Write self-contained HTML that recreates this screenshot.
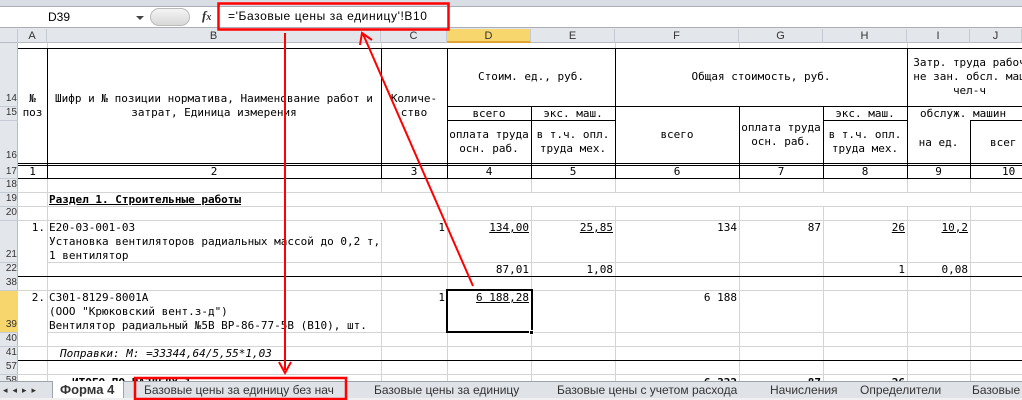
<!DOCTYPE html>
<html><head><meta charset="utf-8"><style>
*{margin:0;padding:0;box-sizing:border-box}
body{width:1022px;height:400px;overflow:hidden;background:#fff;position:relative;font-family:"DejaVu Sans Mono","Liberation Mono",monospace;font-size:11px;color:#000}
div{position:absolute}
.t{white-space:nowrap;line-height:14px}
.c{text-align:center}
.r{text-align:right}
.h{height:1px}
.v{width:1px}
.g{background:#d4d4d4}
.b{background:#000}
.rh{left:0;width:18px;font-size:10px;color:#333;text-align:right;padding-right:1px;line-height:14px;font-family:"Liberation Sans",sans-serif}
.ch{top:29px;height:14px;text-align:center;font-family:"Liberation Sans",sans-serif;font-size:11px;color:#333;border-right:1px solid #c5cad3;line-height:14px}
u{text-decoration:underline}
</style></head><body>
<!-- toolbar strip -->
<div style="left:0;top:0;width:1022px;height:7px;background:#d9dde4;border-bottom:1px solid #a9aeb6"></div>
<div style="left:0;top:7px;width:1022px;height:21px;background:#fff;border-bottom:1px solid #a9aeb6"></div>
<div class="t" style="left:48px;top:10px;font-family:'Liberation Sans',sans-serif;font-size:12px">D39</div>
<div style="left:136px;top:16px;width:0;height:0;border-left:4px solid transparent;border-right:4px solid transparent;border-top:4px solid #444"></div>
<div style="left:150px;top:8px;width:40px;height:18px;border-radius:9px;background:linear-gradient(#f4f4f4,#d8d8d8);border:1px solid #bbb"></div>
<div class="t" style="left:202px;top:9px;font-family:'Liberation Serif',serif;font-style:italic;font-weight:bold;font-size:13px;color:#333">f<span style="font-size:10px">x</span></div>
<div class="t" style="left:228px;top:9px;font-family:'Liberation Sans',sans-serif;font-size:12px;letter-spacing:0.6px">='Базовые цены за единицу'!B10</div>
<!-- column headers -->
<div style="left:0;top:28px;width:1022px;height:15px;background:#e3e6eb;border-bottom:1px solid #b7bcc4"></div>
<div class="ch" style="left:0;width:18px"></div>
<div class="ch" style="left:18px;width:29px">A</div>
<div class="ch" style="left:47px;width:334px">B</div>
<div class="ch" style="left:381px;width:66px">C</div>
<div class="ch" style="left:447px;width:84px;background:#f8d66e;border-bottom:2px solid #e0a530">D</div>
<div class="ch" style="left:531px;width:84px">E</div>
<div class="ch" style="left:615px;width:124px">F</div>
<div class="ch" style="left:739px;width:84px">G</div>
<div class="ch" style="left:823px;width:84px">H</div>
<div class="ch" style="left:907px;width:63px">I</div>
<div class="ch" style="left:970px;width:52px">J</div>
<!-- row header column -->
<div style="left:0;top:43px;width:18px;height:338px;background:#e3e6eb;border-right:1px solid #b7bcc4"></div>
<div style="left:0;top:290px;width:18px;height:42px;background:#f8d66e"></div>
<div class="rh" style="top:92px">14</div>
<div class="rh" style="top:106px">15</div>
<div class="rh" style="top:149px">16</div>
<div class="rh" style="top:165px">17</div>
<div class="rh" style="top:178px">18</div>
<div class="rh" style="top:192px">19</div>
<div class="rh" style="top:206px">20</div>
<div class="rh" style="top:248px">21</div>
<div class="rh" style="top:262px">22</div>
<div class="rh" style="top:276px">38</div>
<div class="rh" style="top:318px">39</div>
<div class="rh" style="top:332px">40</div>
<div class="rh" style="top:346px">41</div>
<div class="rh" style="top:360px">57</div>
<div class="rh" style="top:374px">58</div>
<!-- row header separators -->
<div class="h" style="left:0;top:106px;width:18px;background:#c5cad3"></div>
<div class="h" style="left:0;top:120px;width:18px;background:#c5cad3"></div>
<div class="h" style="left:0;top:178px;width:18px;background:#c5cad3"></div>
<div class="h" style="left:0;top:192px;width:18px;background:#c5cad3"></div>
<div class="h" style="left:0;top:206px;width:18px;background:#c5cad3"></div>
<div class="h" style="left:0;top:220px;width:18px;background:#c5cad3"></div>
<div class="h" style="left:0;top:262px;width:18px;background:#c5cad3"></div>
<div class="h" style="left:0;top:290px;width:18px;background:#c5cad3"></div>
<div class="h" style="left:0;top:332px;width:18px;background:#c5cad3"></div>
<div class="h" style="left:0;top:346px;width:18px;background:#c5cad3"></div>
<div class="h" style="left:0;top:374px;width:18px;background:#c5cad3"></div>

<!-- gray gridlines body -->
<div class="v g" style="left:47px;top:43px;height:5px"></div>
<div class="v g" style="left:381px;top:43px;height:5px"></div>
<div class="v g" style="left:615px;top:43px;height:5px"></div>
<div class="v g" style="left:739px;top:43px;height:5px"></div>
<div class="v g" style="left:907px;top:43px;height:5px"></div>
<div class="h g" style="left:18px;top:192px;width:1004px"></div>
<div class="h g" style="left:18px;top:206px;width:1004px"></div>
<div class="h g" style="left:18px;top:220px;width:1004px"></div>
<div class="h g" style="left:47px;top:262px;width:975px"></div>
<div class="h g" style="left:18px;top:290px;width:1004px"></div>
<div class="h g" style="left:47px;top:332px;width:975px"></div>
<div class="h g" style="left:18px;top:346px;width:1004px"></div>
<div class="h g" style="left:18px;top:374px;width:1004px"></div>
<div class="v g" style="left:47px;top:178px;height:203px"></div>
<div class="v g" style="left:381px;top:178px;height:14px"></div>
<div class="v g" style="left:381px;top:220px;height:161px"></div>
<div class="v g" style="left:447px;top:178px;height:14px"></div>
<div class="v g" style="left:447px;top:206px;height:175px"></div>
<div class="v g" style="left:531px;top:178px;height:14px"></div>
<div class="v g" style="left:531px;top:206px;height:175px"></div>
<div class="v g" style="left:615px;top:178px;height:14px"></div>
<div class="v g" style="left:615px;top:206px;height:175px"></div>
<div class="v g" style="left:739px;top:178px;height:14px"></div>
<div class="v g" style="left:739px;top:206px;height:175px"></div>
<div class="v g" style="left:823px;top:178px;height:14px"></div>
<div class="v g" style="left:823px;top:206px;height:175px"></div>
<div class="v g" style="left:907px;top:178px;height:14px"></div>
<div class="v g" style="left:907px;top:206px;height:175px"></div>
<div class="v g" style="left:970px;top:178px;height:14px"></div>
<div class="v g" style="left:970px;top:206px;height:175px"></div>

<!-- black header table -->
<div class="h b" style="left:18px;top:48px;width:1004px"></div>
<div class="h b" style="left:447px;top:106px;width:575px"></div>
<div class="h b" style="left:447px;top:120px;width:168px"></div>
<div class="h b" style="left:823px;top:120px;width:84px"></div>
<div class="h b" style="left:970px;top:120px;width:52px"></div>
<div class="h b" style="left:18px;top:163px;width:1004px"></div>
<div class="h b" style="left:18px;top:165px;width:1004px"></div>
<div class="h b" style="left:18px;top:178px;width:1004px"></div>
<div class="v b" style="left:47px;top:48px;height:131px"></div>
<div class="v b" style="left:381px;top:48px;height:131px"></div>
<div class="v b" style="left:447px;top:48px;height:131px"></div>
<div class="v b" style="left:531px;top:106px;height:73px"></div>
<div class="v b" style="left:615px;top:48px;height:131px"></div>
<div class="v b" style="left:739px;top:106px;height:73px"></div>
<div class="v b" style="left:823px;top:106px;height:73px"></div>
<div class="v b" style="left:907px;top:48px;height:131px"></div>
<div class="v b" style="left:970px;top:120px;height:59px"></div>
<div class="h b" style="left:18px;top:276px;width:1004px"></div>
<div class="h b" style="left:18px;top:360px;width:1004px"></div>

<!-- header text -->
<div class="t c" style="left:18px;top:92px;width:29px">№<br>поз</div>
<div class="t c" style="left:47px;top:92px;width:334px">Шифр и № позиции норматива, Наименование работ и<br>затрат, Единица измерения</div>
<div class="t c" style="left:381px;top:92px;width:66px">Количе-<br>ство</div>
<div class="t c" style="left:447px;top:70px;width:168px">Стоим. ед., руб.</div>
<div class="t c" style="left:615px;top:70px;width:292px">Общая стоимость, руб.</div>
<div class="t c" style="left:907px;top:56px;width:125px">Затр. труда рабоч<br>не зан. обсл. маш<br>чел-ч</div>
<div class="t c" style="left:447px;top:107px;width:84px">всего</div>
<div class="t c" style="left:531px;top:107px;width:84px">экс. маш.</div>
<div class="t c" style="left:823px;top:107px;width:84px">экс. маш.</div>
<div class="t" style="left:920px;top:107px">обслуж. машин</div>
<div class="t c" style="left:447px;top:128px;width:84px">оплата труда<br>осн. раб.</div>
<div class="t c" style="left:531px;top:128px;width:84px">в т.ч. опл.<br>труда мех.</div>
<div class="t c" style="left:615px;top:128px;width:124px">всего</div>
<div class="t c" style="left:739px;top:121px;width:84px">оплата труда<br>осн. раб.</div>
<div class="t c" style="left:823px;top:128px;width:84px">в т.ч. опл.<br>труда мех.</div>
<div class="t c" style="left:907px;top:136px;width:63px">на ед.</div>
<div class="t" style="left:990px;top:136px">всег</div>
<div class="t c" style="left:18px;top:165px;width:29px">1</div>
<div class="t c" style="left:47px;top:165px;width:334px">2</div>
<div class="t c" style="left:381px;top:165px;width:66px">3</div>
<div class="t c" style="left:447px;top:165px;width:84px">4</div>
<div class="t c" style="left:531px;top:165px;width:84px">5</div>
<div class="t c" style="left:615px;top:165px;width:124px">6</div>
<div class="t c" style="left:739px;top:165px;width:84px">7</div>
<div class="t c" style="left:823px;top:165px;width:84px">8</div>
<div class="t c" style="left:907px;top:165px;width:63px">9</div>
<div class="t" style="left:1002px;top:165px">10</div>

<!-- body -->
<div style="left:48px;top:193px;width:230px;height:13px;background:#fff"></div>
<div class="t" style="left:49px;top:193px;font-weight:bold"><u>Раздел 1.  Строительные работы</u></div>
<div class="t r" style="left:18px;top:221px;width:27px">1.</div>
<div class="t" style="left:49px;top:221px">E20-03-001-03<br>Установка вентиляторов радиальных массой до 0,2 т,<br>1 вентилятор</div>
<div class="t r" style="left:381px;top:221px;width:64px">1</div>
<div class="t r" style="left:447px;top:221px;width:82px"><u>134,00</u></div>
<div class="t r" style="left:531px;top:221px;width:82px"><u>25,85</u></div>
<div class="t r" style="left:615px;top:221px;width:122px">134</div>
<div class="t r" style="left:739px;top:221px;width:82px">87</div>
<div class="t r" style="left:823px;top:221px;width:82px"><u>26</u></div>
<div class="t r" style="left:907px;top:221px;width:61px"><u>10,2</u></div>
<div class="t r" style="left:447px;top:263px;width:82px">87,01</div>
<div class="t r" style="left:531px;top:263px;width:82px">1,08</div>
<div class="t r" style="left:823px;top:263px;width:82px">1</div>
<div class="t r" style="left:907px;top:263px;width:61px">0,08</div>
<div class="t r" style="left:18px;top:291px;width:27px">2.</div>
<div class="t" style="left:49px;top:291px">С301-8129-8001А<br>(ООО "Крюковский вент.з-д")<br>Вентилятор радиальный №5В ВР-86-77-5В (В10), шт.</div>
<div class="t r" style="left:381px;top:291px;width:64px">1</div>
<div class="t r" style="left:447px;top:291px;width:82px"><u>6 188,28</u></div>
<div class="t r" style="left:615px;top:291px;width:122px">6 188</div>
<div style="left:446px;top:289px;width:87px;height:44px;border:2px solid #000"></div>
<div style="left:529px;top:330px;width:5px;height:5px;background:#000;border:1px solid #fff"></div>
<div class="t" style="left:60px;top:347px;font-style:italic">Поправки: М: =33344,64/5,55*1,03</div>
<div class="t" style="left:72px;top:376px;font-weight:bold">ИТОГО ПО РАЗДЕЛУ 1</div>
<div class="t r" style="left:615px;top:376px;width:122px;font-weight:bold">6 322</div>
<div class="t r" style="left:739px;top:376px;width:82px;font-weight:bold">87</div>
<div class="t r" style="left:823px;top:376px;width:82px;font-weight:bold">26</div>

<!-- tab bar -->
<div style="left:0;top:381px;width:1022px;height:19px;background:#dfe3e8;border-top:1px solid #9da3ab;font-family:'Liberation Sans',sans-serif;font-size:12px">
<div class="t" style="left:3px;top:1px;font-size:9px;color:#333;letter-spacing:5px">◂◂▸▸</div>
<div style="left:52px;top:-1px;width:72px;height:18px;background:#fff;border:1px solid #9da3ab;border-top:none"></div>
<div class="t" style="left:60px;top:1px;font-weight:bold;font-size:13px;color:#333">Форма 4</div>
<div class="t" style="left:144px;top:1px;color:#333">Базовые цены за единицу без нач</div>
<div class="t" style="left:374px;top:1px;color:#333">Базовые цены за единицу</div>
<div class="t" style="left:557px;top:1px;color:#333">Базовые цены с учетом расхода</div>
<div class="t" style="left:770px;top:1px;color:#333">Начисления</div>
<div class="t" style="left:860px;top:1px;color:#333">Определители</div>
<div class="t" style="left:972px;top:1px;color:#333">Базовые</div>
</div>
<div style="left:0;top:398px;width:1022px;height:2px;background:#f0f0f0"></div>

<!-- red annotations -->
<svg style="position:absolute;left:0;top:0" width="1022" height="400">
<rect x="218.5" y="3.5" width="230" height="26" fill="none" stroke="#f00" stroke-width="2.5"/>
<rect x="135" y="378" width="211" height="21" fill="none" stroke="#f00" stroke-width="2.5"/>
<line x1="285" y1="33" x2="285" y2="370" stroke="#f00" stroke-width="2"/>
<polyline points="279,362 285,373 291,362" fill="none" stroke="#f00" stroke-width="2"/>
<line x1="473" y1="286" x2="363" y2="34" stroke="#f00" stroke-width="2"/>
<polyline points="360,45 362,33 372,40" fill="none" stroke="#f00" stroke-width="2"/>
</svg>
</body></html>
